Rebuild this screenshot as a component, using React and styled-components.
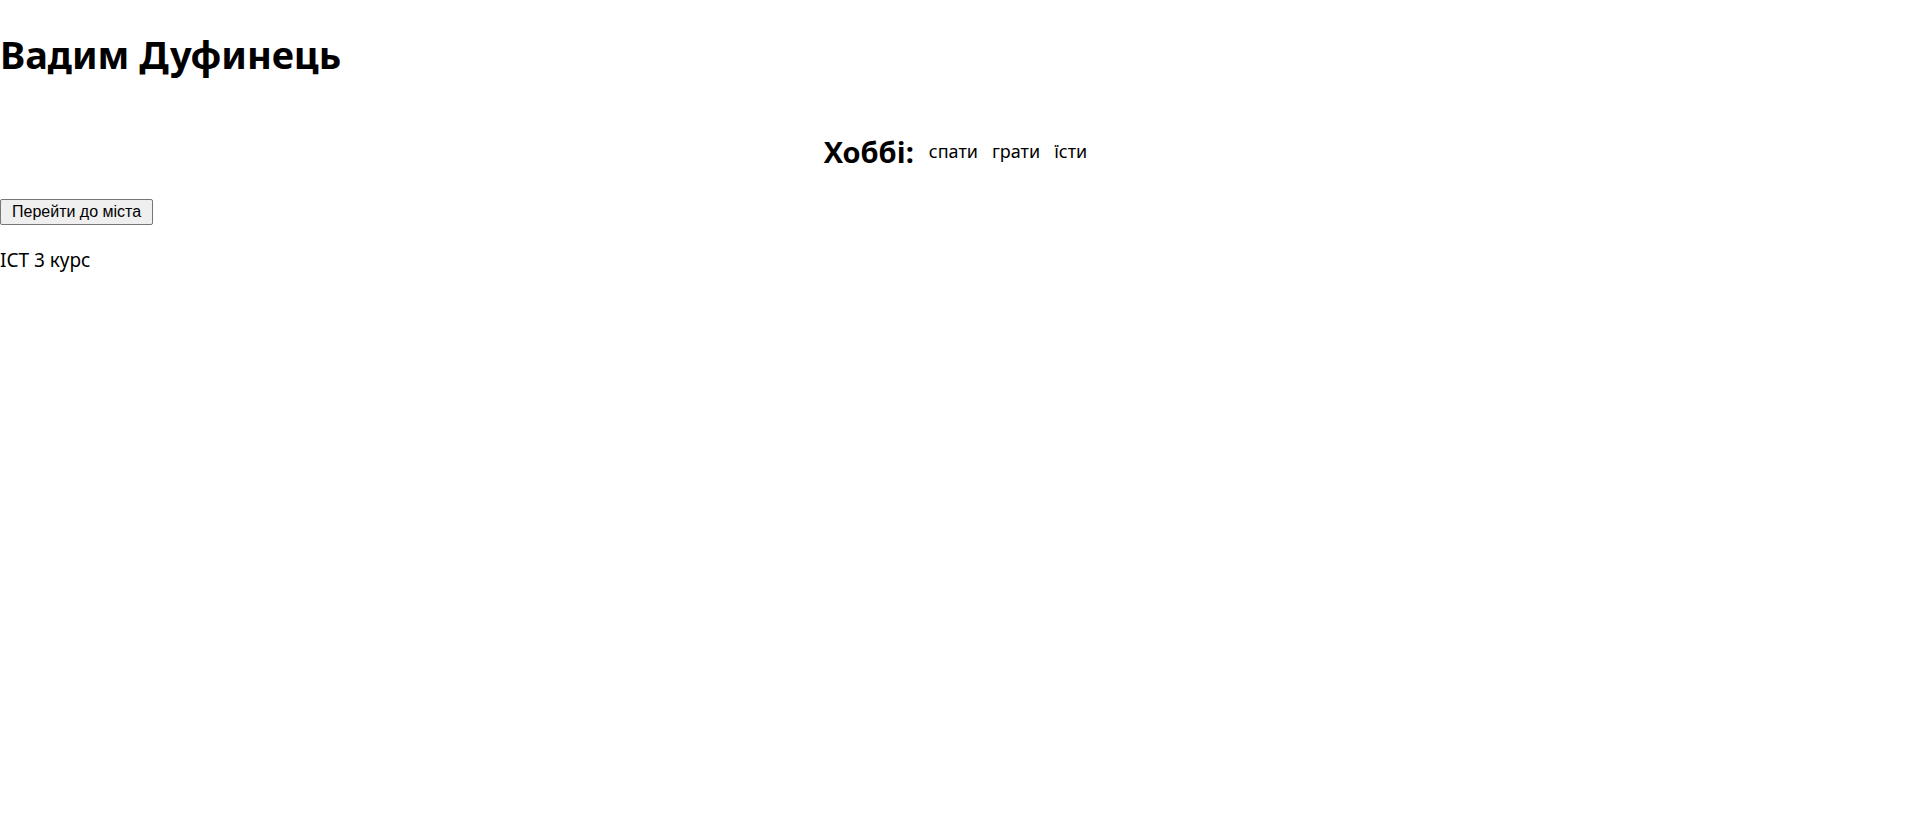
import React from 'react'
import styled, { createGlobalStyle } from 'styled-components'

const GlobalStyle = createGlobalStyle`
  body {
    margin: 0;
    background: #fff;
    color: #000;
    font-family: 'Noto Sans', 'Open Sans', sans-serif;
  }
`

const Title = styled.h1`
  margin: 28px 0 0;
  font-size: 38px;
  line-height: 52px;
  font-weight: 700;
`

const Hobbies = styled.section`
  display: flex;
  justify-content: center;
  align-items: center;
  gap: 15px;
  margin-top: 51px;
  height: 40px;

  h2 {
    margin: 0;
    font-size: 29px;
    font-weight: 700;
  }
`

const HobbyList = styled.ul`
  display: flex;
  gap: 14px;
  margin: 0;
  padding: 0;
  list-style: none;
  font-size: 18px;
`

const CityButton = styled.button`
  display: block;
  margin-top: 28px;
  padding: 3px 11px;
  font-family: 'Liberation Sans', Arial, sans-serif;
  font-size: 16px;
  color: #000;
  background: #efefef;
  border: 1px solid #767676;
  border-radius: 2px;
`

const Course = styled.p`
  margin: 22px 0 0;
  font-size: 19px;
`

const App = () => {
  const hobbies = ['спати', 'грати', 'їсти']

  return (
    <>
      <GlobalStyle />
      <Title>Вадим Дуфинець</Title>
      <Hobbies>
        <h2>Хоббі:</h2>
        <HobbyList>
          {hobbies.map(h => (
            <li key={h}>{h}</li>
          ))}
        </HobbyList>
      </Hobbies>
      <CityButton>Перейти до міста</CityButton>
      <Course>ICT 3 курс</Course>
    </>
  )
}

export default App
